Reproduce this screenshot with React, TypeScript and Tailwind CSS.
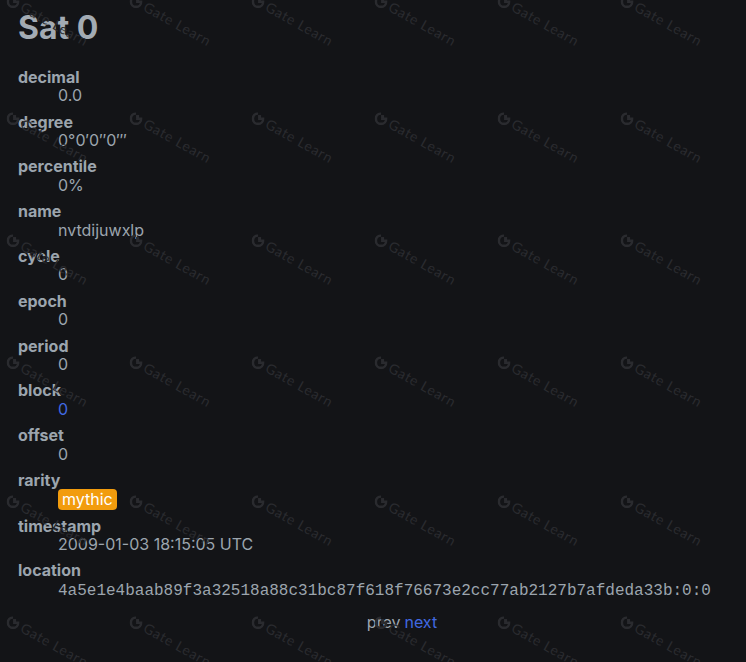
const sat = {
  decimal: "0.0",
  degree: "0°0′0″0‴",
  percentile: "0%",
  name: "nvtdijuwxlp",
  cycle: "0",
  epoch: "0",
  period: "0",
  block: "0",
  offset: "0",
  rarity: "mythic",
  timestamp: "2009-01-03 18:15:05 UTC",
  location: "4a5e1e4baab89f3a32518a88c31bc87f618f76673e2cc77ab2127b7afdeda33b:0:0",
};

const markCols = [11, 134, 256, 379, 502, 625];
const markRows = [-8, 109, 231, 353, 492, 613];

function GateMark({ x, y }: { x: number; y: number }) {
  return (
    <div
      className="absolute flex items-center gap-[3px] origin-top-left rotate-[29deg] text-[#2a2b2f]"
      style={{ left: x, top: y }}
    >
      <svg width="13" height="13" viewBox="0 0 12 12" className="shrink-0 -rotate-[29deg]">
        <path d="M6 1.2A4.8 4.8 0 1 0 10.8 6H6" fill="none" stroke="currentColor" strokeWidth="2.4" />
        <rect x="6" y="2.6" width="2.8" height="2.8" fill="currentColor" />
      </svg>
      <span className="text-[14px] leading-none tracking-[0.8px] whitespace-nowrap font-['Lato',sans-serif]">
        Gate Learn
      </span>
    </div>
  );
}

function Field({ label, children }: { label: string; children: React.ReactNode }) {
  return (
    <>
      <dt className="font-bold">{label}</dt>
      <dd className="ml-10 mb-2">{children}</dd>
    </>
  );
}

export default function App() {
  return (
    <div className="relative min-h-screen overflow-hidden bg-[#131417] text-[#9ca5ae] font-['Inter',sans-serif] text-[16px] leading-[18.4px]">
      <main className="pl-[18px] pt-[6px] pb-8">
        <h1 className="text-[32px] font-bold leading-[44.8px] mb-[17px] text-[#a3abb3]">Sat 0</h1>
        <dl>
          <Field label="decimal">{sat.decimal}</Field>
          <Field label="degree">{sat.degree}</Field>
          <Field label="percentile">{sat.percentile}</Field>
          <Field label="name">{sat.name}</Field>
          <Field label="cycle">{sat.cycle}</Field>
          <Field label="epoch">{sat.epoch}</Field>
          <Field label="period">{sat.period}</Field>
          <Field label="block">
            <a className="text-[#4169e1]">{sat.block}</a>
          </Field>
          <Field label="offset">{sat.offset}</Field>
          <Field label="rarity">
            <span className="inline-block -my-px rounded-[4px] bg-[#f29c0d] px-[4px] py-px leading-[19px] text-white">
              {sat.rarity}
            </span>
          </Field>
          <Field label="timestamp">{sat.timestamp}</Field>
          <Field label="location">
            <span className="font-['Liberation_Mono',monospace]">{sat.location}</span>
          </Field>
        </dl>
        <div className="flex justify-center gap-[4px] pl-10 mt-[13px]">
          <span>prev</span>
          <a className="text-[#4169e1]">next</a>
        </div>
      </main>

      <div className="pointer-events-none absolute inset-0">
        {markRows.map((y) =>
          markCols.map((x) => <GateMark key={`${x}-${y}`} x={x} y={y} />)
        )}
      </div>
    </div>
  );
}
